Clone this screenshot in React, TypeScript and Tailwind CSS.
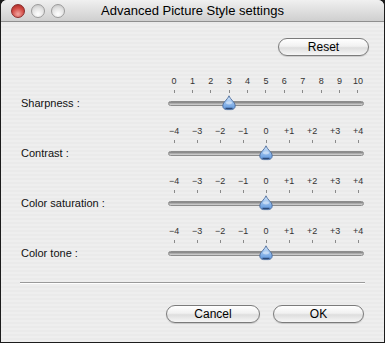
import React from 'react';

const FONT = { fontFamily: '"Liberation Sans", Arial, sans-serif' };

type SliderDef = { label: string; marks: string[]; value: number };

const SLIDERS: SliderDef[] = [
  { label: 'Sharpness :', marks: ['0', '1', '2', '3', '4', '5', '6', '7', '8', '9', '10'], value: 3 },
  { label: 'Contrast :', marks: ['−4', '−3', '−2', '−1', '0', '+1', '+2', '+3', '+4'], value: 4 },
  { label: 'Color saturation :', marks: ['−4', '−3', '−2', '−1', '0', '+1', '+2', '+3', '+4'], value: 4 },
  { label: 'Color tone :', marks: ['−4', '−3', '−2', '−1', '0', '+1', '+2', '+3', '+4'], value: 4 },
];

function Thumb() {
  return (
    <svg width="14" height="16" viewBox="0 0 14 16">
      <defs>
        <linearGradient id="thumbFill" x1="0" y1="0" x2="0" y2="1">
          <stop offset="0" stopColor="#d9e9fb" />
          <stop offset="0.45" stopColor="#9cc2ef" />
          <stop offset="1" stopColor="#5d95dc" />
        </linearGradient>
      </defs>
      <path
        d="M7 0.8 C7.6 2.4 9.4 4.6 11.2 6.6 C12.6 8.2 13.2 9.6 13.2 11 C13.2 13.2 11.4 14.6 9.4 14.6 L4.6 14.6 C2.6 14.6 0.8 13.2 0.8 11 C0.8 9.6 1.4 8.2 2.8 6.6 C4.6 4.6 6.4 2.4 7 0.8 Z"
        fill="url(#thumbFill)"
        stroke="#4a6a9a"
        strokeWidth="0.9"
      />
      <path d="M3.5 13.4 L10.5 13.4" stroke="#2d4a78" strokeWidth="1.2" />
      <ellipse cx="7" cy="7.8" rx="3" ry="1.6" fill="#ffffff" opacity="0.45" />
    </svg>
  );
}

function Slider({ def }: { def: SliderDef }) {
  const pct = def.value / (def.marks.length - 1);
  return (
    <div className="flex h-[50px]">
      <div className="w-[167px] shrink-0 pl-[20px] pt-[21px] text-[11px] text-[#111] leading-[14px]">
        {def.label}
      </div>
      <div className="w-[196px] shrink-0">
        <div className="flex justify-between px-[6px] h-[12px]">
          {def.marks.map((m) => (
            <div key={m} className="w-0 flex flex-col items-center">
              <span className="text-[9px] leading-[12px] text-[#333] whitespace-nowrap">{m}</span>
            </div>
          ))}
        </div>
        <div className="flex justify-between px-[6px] h-[8px] pt-[3px]">
          {def.marks.map((m) => (
            <div key={m} className="w-0 flex justify-center">
              <div className="w-px h-[3px] bg-[#8a8a8a] shrink-0" />
            </div>
          ))}
        </div>
        <div className="relative h-[16px] flex items-center">
          <div className="w-full h-[5px] rounded-full border border-[#8c8c8c] bg-[linear-gradient(#7d7d7d,#b5b5b5_60%,#d8d8d8)]" />
          <div className="absolute top-[0px] px-[6px] left-0 right-0">
            <div className="relative h-[16px]">
              <div className="absolute top-0 -ml-[7px]" style={{ left: `${pct * 100}%` }}>
                <Thumb />
              </div>
            </div>
          </div>
        </div>
      </div>
    </div>
  );
}

function AquaButton({ label, className = '' }: { label: string; className?: string }) {
  return (
    <button
      className={`h-[18px] rounded-full border border-[#7b7b7b] bg-[linear-gradient(#ffffff,#f1f1f1_45%,#dedede_55%,#f6f6f6)] shadow-[0_1px_1px_rgba(0,0,0,0.15)] text-[12px] leading-[16px] text-black ${className}`}
    >
      {label}
    </button>
  );
}

function Light({ red }: { red?: boolean }) {
  return (
    <div
      className={
        red
          ? 'w-[14px] h-[14px] rounded-full border border-[#8a2a2a] bg-[radial-gradient(circle_at_50%_75%,#f2a5a0,#d24a44_55%,#9e2520)]'
          : 'w-[14px] h-[14px] rounded-full border border-[#9b9b9b] bg-[radial-gradient(circle_at_50%_75%,#ffffff,#e2e2e2_55%,#bdbdbd)]'
      }
    />
  );
}

export default function App() {
  return (
    <div className="w-[385px] h-[343px] bg-[#1c1c1c] px-px pb-px" style={FONT}>
      <div className="h-full rounded-t-[6px] overflow-hidden flex flex-col bg-[repeating-linear-gradient(0deg,#eeeeee_0px,#eeeeee_2px,#eaeaea_2px,#eaeaea_4px)]">
        <div className="relative h-[22px] shrink-0 flex items-center border-b border-[#8f8f8f] bg-[linear-gradient(#f0f0f0,#dcdcdc_60%,#cfcfcf)]">
          <div className="flex gap-[6px] ml-[10px]">
            <Light red />
            <Light />
            <Light />
          </div>
          <div className="absolute inset-0 flex items-center justify-center text-[13px] text-black">
            Advanced Picture Style settings
          </div>
        </div>

        <div className="flex justify-end pr-[15px] pt-[16px]">
          <AquaButton label="Reset" className="w-[91px]" />
        </div>

        <div className="pt-[19px]">
          {SLIDERS.map((s) => (
            <Slider key={s.label} def={s} />
          ))}
        </div>

        <div className="mx-[19px] mt-[7px] h-[2px] border-t border-[#9a9a9a] border-b-white border-b" />

        <div className="flex justify-end gap-[13px] pr-[20px] pt-[21px]">
          <AquaButton label="Cancel" className="w-[94px]" />
          <AquaButton label="OK" className="w-[91px]" />
        </div>
      </div>
    </div>
  );
}
